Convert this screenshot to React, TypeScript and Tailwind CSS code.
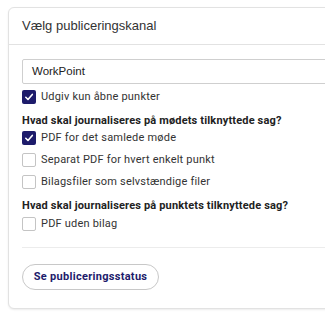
import React from "react";

function Box({ checked }: { checked?: boolean }) {
  if (checked) {
    return (
      <span className="flex h-[14px] w-[14px] shrink-0 items-center justify-center rounded-[2px] bg-[#1d1b6b]">
        <svg width="10" height="10" viewBox="0 0 10 10" fill="none">
          <path d="M1.8 5.3 L4 7.5 L8.3 2.4" stroke="white" strokeWidth="1.6" strokeLinecap="round" strokeLinejoin="round" />
        </svg>
      </span>
    );
  }
  return <span className="h-[14px] w-[14px] shrink-0 rounded-[2px] border border-[#c4c4c4] bg-white" />;
}

function Row({ checked, label, className }: { checked?: boolean; label: string; className?: string }) {
  return (
    <div className={"flex h-[14px] items-center gap-[5px] " + (className ?? "")}>
      <Box checked={checked} />
      <span className="text-[11px] leading-[14px] tracking-[0.2px] text-[#333]">{label}</span>
    </div>
  );
}

export default function App() {
  return (
    <div className="h-[317px] w-[325px] overflow-hidden bg-white pl-[8px] pt-[7px]" style={{ fontFamily: "Roboto, 'Liberation Sans', sans-serif" }}>
      <div className="w-[340px] rounded-[6px] border border-[#e2e2e2] bg-white shadow-[0_1px_2px_rgba(0,0,0,0.08)]">
        <div className="flex h-[37px] items-center border-b border-[#e2e2e2] pl-[13px]">
          <span className="text-[13px] text-[#333]" style={{ fontFamily: "'Liberation Sans', sans-serif" }}>Vælg publiceringskanal</span>
        </div>
        <div className="pl-[13px] pt-[14px] pb-[18px]">
          <div className="flex h-[25px] items-center rounded-[2px] border border-[#cfcfcf] pl-[9px]">
            <span className="text-[11.5px] text-[#222]" style={{ fontFamily: "'Liberation Sans', sans-serif" }}>WorkPoint</span>
          </div>
          <Row checked label="Udgiv kun åbne punkter" className="mt-[6px]" />
          <div className="mt-[10px] text-[11px] font-bold leading-[14px] tracking-[0.16px] text-[#222]">Hvad skal journaliseres på mødets tilknyttede sag?</div>
          <Row checked label="PDF for det samlede møde" className="mt-[3px]" />
          <Row label="Separat PDF for hvert enkelt punkt" className="mt-[8px]" />
          <Row label="Bilagsfiler som selvstændige filer" className="mt-[8px]" />
          <div className="mt-[10px] text-[11px] font-bold leading-[14px] tracking-[0.16px] text-[#222]">Hvad skal journaliseres på punktets tilknyttede sag?</div>
          <Row label="PDF uden bilag" className="mt-[4px]" />
          <div className="mt-[16px] border-t border-[#ececec]" />
          <button className="mt-[16px] flex h-[26px] w-[137px] items-center justify-center rounded-full border border-[#c8c8c8] bg-white text-[11px] font-bold tracking-[0.3px] text-[#1d1b6b]">
            Se publiceringsstatus
          </button>
        </div>
      </div>
    </div>
  );
}
